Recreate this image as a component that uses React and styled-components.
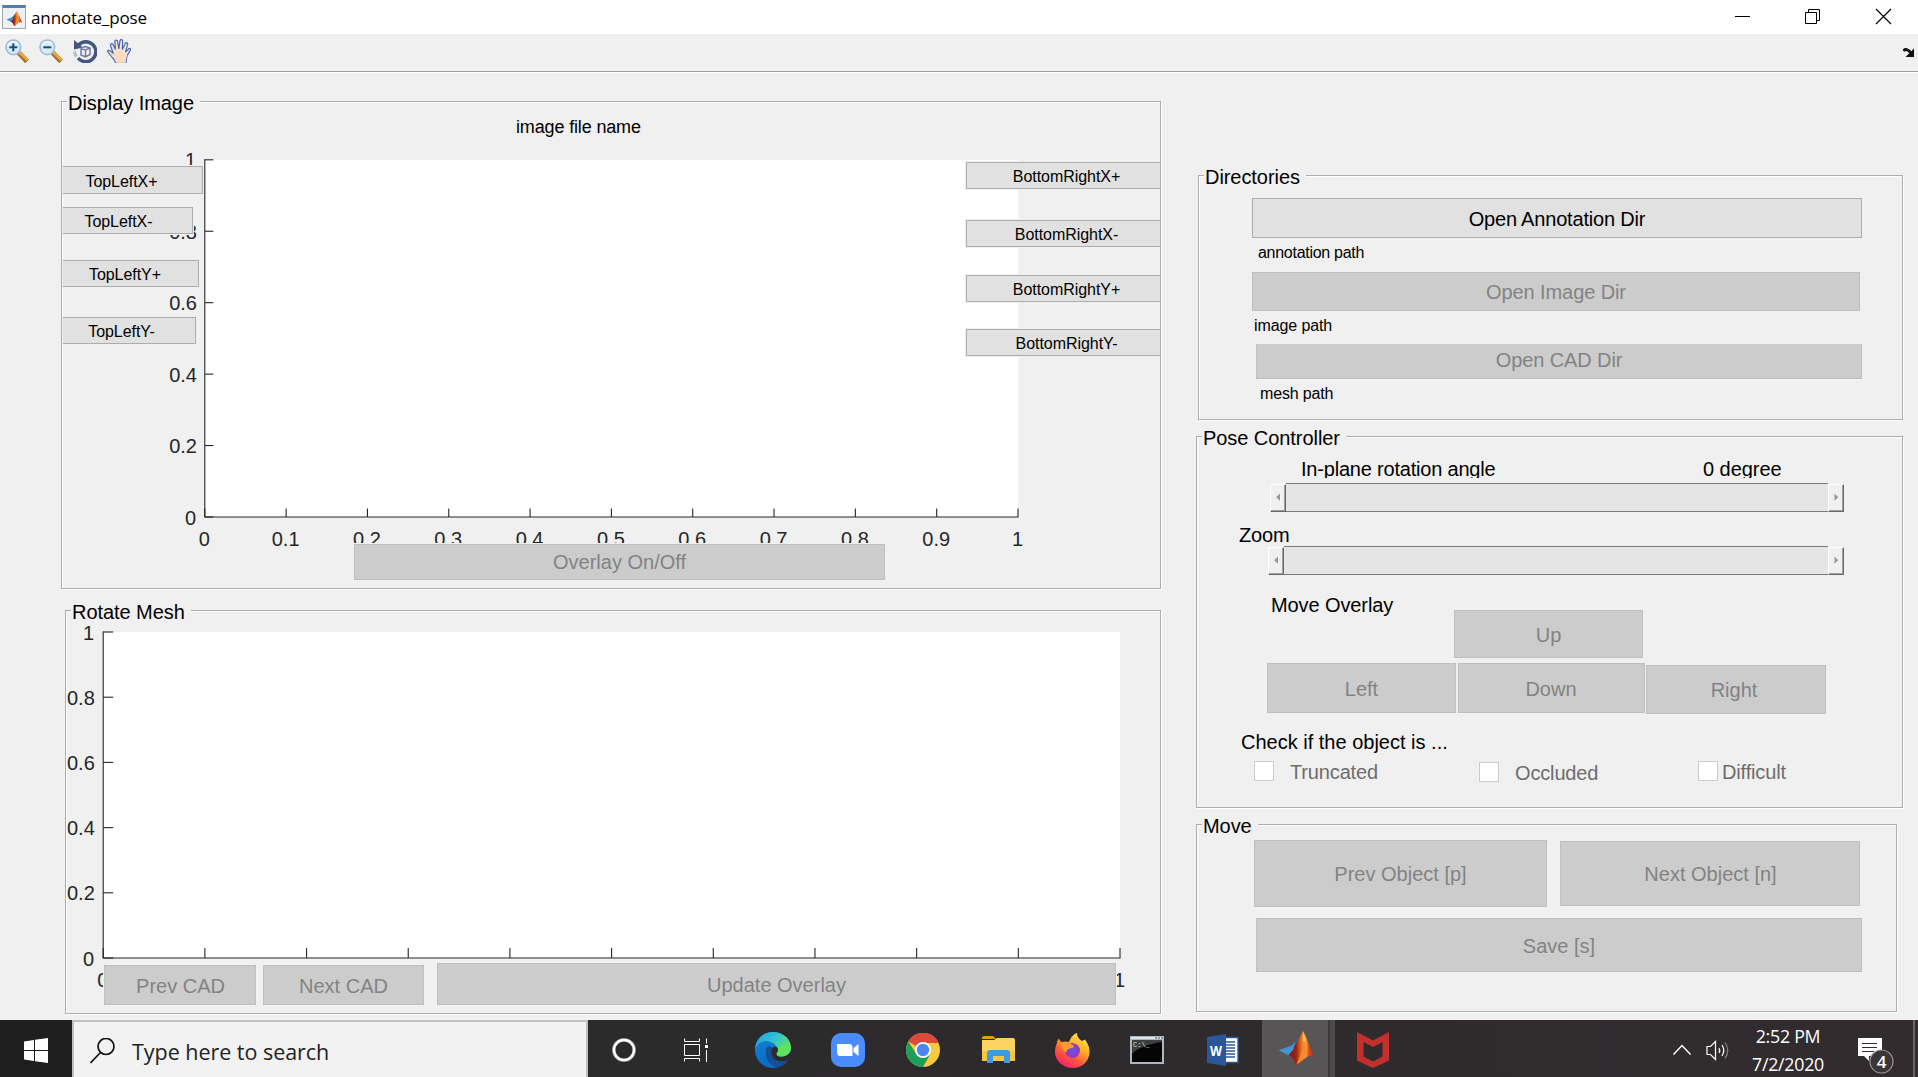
import React from "react";
import styled, { createGlobalStyle } from "styled-components";

const GlobalStyle = createGlobalStyle`
  * { box-sizing: border-box; }
  html, body { margin: 0; padding: 0; }
  body {
    background: #f0f0f0;
    font-family: "Liberation Sans", Arial, sans-serif;
    overflow: hidden;
  }
  svg { display: block; flex: none; }
  button { font-family: inherit; margin: 0; padding: 0; }
`;

const UI_FONT = `"Open Sans", "Segoe UI", "Noto Sans", sans-serif`;

const Screen = styled.div`
  width: 1918px;
  height: 1077px;
  display: flex;
  flex-direction: column;
  background: #f0f0f0;
  overflow: hidden;
`;

/* ---------- window chrome ---------- */

const TitleBar = styled.header`
  height: 34px;
  flex: none;
  display: flex;
  align-items: flex-start;
  justify-content: space-between;
  background: #fff;
`;

const TitleGroup = styled.div`
  display: flex;
  gap: 5px;
  padding: 5px 0 0 2px;
`;

const TitleText = styled.span`
  padding-top: 1px;
  font: 17px/24px ${UI_FONT};
  letter-spacing: -0.1px;
  color: #000;
`;

const WindowControls = styled.div`
  display: flex;
  gap: 54px;
  padding: 8px 26px 0 0;
`;

const ToolBar = styled.div`
  height: 39px;
  flex: none;
  display: flex;
  align-items: flex-start;
  gap: 10px;
  padding: 5px 3px 0 5px;
  border-bottom: 1px solid #fff;
  box-shadow: inset 0 -1px 0 #a0a0a0;
`;

const DockArrow = styled.div`
  margin: 9px 0 0 auto;
`;

/* ---------- work area ---------- */

const WorkArea = styled.main`
  height: 947px;
  flex: none;
  display: flex;
`;

const LeftColumn = styled.div`
  width: 1161px;
  display: flex;
  flex-direction: column;
  align-items: flex-end;
  gap: 21px;
  padding-top: 28px;
`;

const RightColumn = styled.div`
  display: flex;
  flex-direction: column;
  gap: 16px;
  padding: 102px 0 0 35px;
`;

const PanelBox = styled.section`
  width: ${(p) => p.$w}px;
  height: ${(p) => p.$h}px;
  margin-left: ${(p) => p.$ml || 0}px;
  flex: none;
  border: 1px solid #adadad;
  box-shadow: 1px 1px 0 #fff, inset 1px 1px 0 #fff;
`;

const PanelTitle = styled.h2`
  width: fit-content;
  margin: -11px 0 -13px 5px;
  padding: 0 6px 0 1px;
  background: #f0f0f0;
  font-size: 20px;
  font-weight: 400;
  line-height: 24px;
  letter-spacing: -0.06px;
  color: #000;
`;

const Layers = styled.div`
  display: grid;
  height: 100%;
  overflow: hidden;
  > * { grid-area: 1 / 1; }
`;

const Caption = styled.p`
  margin: 15px 0 0 454px;
  font-size: 18px;
  line-height: 20px;
  letter-spacing: -0.15px;
  height: 20px;
`;

const ButtonStack = styled.div`
  display: flex;
  flex-direction: column;
  justify-self: ${(p) => p.$side};
  padding: ${(p) => p.$top}px 0 0 ${(p) => p.$left || 0}px;
`;

const BottomRow = styled.div`
  display: flex;
  align-self: end;
  align-items: flex-end;
  padding: 0 0 ${(p) => p.$bottom}px ${(p) => p.$left}px;
`;

const PushButton = styled.button`
  width: ${(p) => p.$w}px;
  height: ${(p) => p.$h}px;
  margin-top: ${(p) => p.$mt || 0}px;
  margin-left: ${(p) => p.$ml || 0}px;
  padding: ${(p) => (p.$pt === undefined ? 1 : p.$pt)}px ${(p) => p.$pr || 0}px ${(p) => p.$pb || 0}px ${(p) => p.$pl || 0}px;
  flex: none;
  border: 1px solid #adadad;
  border-left-width: ${(p) => (p.$cut === "left" ? 0 : 1)}px;
  border-right-width: ${(p) => (p.$cut === "right" ? 0 : 1)}px;
  border-top-width: ${(p) => (p.$cut === "top" ? 0 : 1)}px;
  border-radius: 0;
  outline: 1px solid #f0f0f0;
  background: #e1e1e1;
  color: #000;
  font-size: 20px;
  line-height: 1.1;
  text-align: center;
  letter-spacing: ${(p) => p.$spacing || 0}px;
  &:disabled {
    background: #ccc;
    border-color: #bfbfbf;
    color: #838383;
  }
`;

const CornerButton = styled(PushButton)`
  padding-top: 3px;
  font-size: 16px;
  letter-spacing: -0.05px;
`;

const Row = styled.div`
  display: flex;
  align-items: flex-start;
  margin: ${(p) => p.$mt || 0}px 0 0 ${(p) => p.$ml || 0}px;
`;

const Label = styled.div`
  width: ${(p) => (p.$w ? `${p.$w}px` : "auto")};
  height: ${(p) => p.$h || 24}px;
  margin: ${(p) => p.$mt || 0}px 0 0 ${(p) => p.$ml || 0}px;
  font-size: 20px;
  line-height: 24px;
  letter-spacing: ${(p) => p.$spacing || 0}px;
  white-space: nowrap;
  overflow: hidden;
  color: #000;
`;

const PathText = styled.div`
  height: 18px;
  margin: ${(p) => p.$mt}px 0 0 ${(p) => p.$ml}px;
  font-size: 16px;
  line-height: 18px;
  letter-spacing: ${(p) => p.$spacing}px;
`;

/* slider */

const SliderBox = styled.div`
  display: flex;
  width: ${(p) => p.$w}px;
  height: 29px;
  margin: ${(p) => p.$mt}px 0 0 ${(p) => p.$ml}px;
`;

const SliderArrow = styled.div`
  width: 16px;
  margin-top: 1px;
  display: flex;
  align-items: center;
  justify-content: center;
  padding-bottom: 2px;
  border: solid;
  border-width: 1px;
  border-color: #fff #696969 #696969 #fff;
  box-shadow: inset -1px -1px 0 #a0a0a0;
  background: #f0f0f0;
`;

const SliderTrack = styled.div`
  flex: 1;
  border: solid #7b7b7b;
  border-width: 1px 0;
  background: #e5e5e5;
`;

function Slider({ w, mt, ml }) {
  return (
    <SliderBox $w={w} $mt={mt} $ml={ml}>
      <SliderArrow>
        <svg width="5" height="9" viewBox="0 0 5 9"><path d="M4.500 1v8L.8 5z" fill="#fff" /><path d="M4 .5v7.500L.2 4.200z" fill="#969696" /></svg>
      </SliderArrow>
      <SliderTrack />
      <SliderArrow>
        <svg width="5" height="9" viewBox="0 0 5 9"><path d="M1 1v8l4-4z" fill="#fff" /><path d="M.5.500V8l3.800-3.800z" fill="#969696" /></svg>
      </SliderArrow>
    </SliderBox>
  );
}

/* checkbox */

const CheckLabel = styled.label`
  display: flex;
  align-items: flex-start;
  margin-top: ${(p) => p.$mt || 0}px;
  width: ${(p) => p.$w}px;
  gap: ${(p) => p.$gap}px;
  font-size: 20px;
  line-height: 24px;
  letter-spacing: -0.15px;
  color: #6d6d6d;
`;

const CheckSquare = styled.span`
  width: 20px;
  height: 20px;
  flex: none;
  border: 1px solid #ccc;
  background: #fff;
`;

const CheckText = styled.span`
  margin-top: -1px;
`;

function Check({ children, ...rest }) {
  return (
    <CheckLabel {...rest}>
      <CheckSquare />
      <CheckText>{children}</CheckText>
    </CheckLabel>
  );
}

function Panel({ title, w, h, ml, children }) {
  return (
    <PanelBox $w={w} $h={h} $ml={ml}>
      <PanelTitle>{title}</PanelTitle>
      {children}
    </PanelBox>
  );
}

/* ---------- axes ---------- */

const TickText = styled.text`
  font-family: "Liberation Sans", Arial, sans-serif;
  font-size: 20px;
  fill: #262626;
`;

function Axes({ origin, size, left, right, top, bottom, tick, xLabelBase, yLabelEdge }) {
  const xs = Array.from({ length: 11 }, (_, i) => i / 10);
  const ys = [0, 0.2, 0.4, 0.6, 0.8, 1];
  const px = (v) => left + (right - left) * v;
  const py = (v) => bottom - (bottom - top) * v;
  return (
    <svg width={size[0]} height={size[1]} viewBox={`${origin[0]} ${origin[1]} ${size[0]} ${size[1]}`}>
      <rect x={left} y={top} width={right - left} height={bottom - top} fill="#fff" />
      <g stroke="#262626" strokeWidth="1.100">
        <path d={`M${left} ${top - 0.5}V${bottom}H${right + 0.5}`} fill="none" />
        {xs.map((v) => <path key={v} d={`M${px(v)} ${bottom}v${-tick}`} />)}
        {ys.map((v) => <path key={v} d={`M${left} ${py(v)}h${tick}`} />)}
      </g>
      {xs.map((v) => <TickText key={v} x={px(v) - 0.5} y={xLabelBase} textAnchor="middle">{v}</TickText>)}
      {ys.map((v) => <TickText key={v} x={yLabelEdge - (v === 0 || v === 1 ? 0.8 : 0)} y={py(v) + 7.6} textAnchor="end">{v}</TickText>)}
    </svg>
  );
}

/* ---------- icons ---------- */

function MatlabIcon({ width, height, id }) {
  return (
    <svg width={width} height={height} viewBox="0 0 36 34">
      <defs>
        <linearGradient id={`${id}b`} x1="0" y1="0" x2="1" y2="0">
          <stop offset="0" stopColor="#4fb0e6" /><stop offset=".6" stopColor="#2d7ab8" /><stop offset="1" stopColor="#2a4a70" />
        </linearGradient>
        <linearGradient id={`${id}r`} x1="0" y1="0" x2="1" y2="0">
          <stop offset="0" stopColor="#6b1410" /><stop offset=".35" stopColor="#9c2414" /><stop offset=".55" stopColor="#f07a22" /><stop offset=".68" stopColor="#f9a83a" /><stop offset=".8" stopColor="#d8431c" /><stop offset="1" stopColor="#b52a18" />
        </linearGradient>
      </defs>
      <path d="M0 19.500 10.500 15.500C14 15 18 8 22 2.500L17 17 9.500 24z" fill={`url(#${id}b)`} />
      <path d="M7 22.500C14 20 18 11 24 0c3 4 8 20 12 27-4-3-6-3-8.500-.5C24 28 20 34 17 34c-2-5-4-10-10-11.500z" fill={`url(#${id}r)`} />
      <path d="M0 19.500 10.500 15.500c2-.3 4-2.500 6-5.200L14 19l-4.500 5z" fill="#3f97d2" />
      <path d="M24 1c1.200 7 .8 18-6.500 32 3.500-1 6.500-6 9-7C27.500 18 26 8 24 1z" fill="#f58a2a" />
      <path d="M24 1c.2 3 .3 6 .1 9l2 .4C25.700 7 25 3.500 24 1z" fill="#ffe45c" />
    </svg>
  );
}

const FigureIconFrame = styled.div`
  width: 24px;
  height: 24px;
  display: flex;
  align-items: center;
  justify-content: center;
  border: 1px solid #a3a7ac;
  border-top: 3px solid #4d80ac;
  background: #eef1f3;
`;

function Magnifier({ minus }) {
  return (
    <svg width="24" height="24" viewBox="0 0 24 24">
      <path d="M13.500 13.500 22 22.500" stroke="#9a7440" strokeWidth="5" />
      <path d="M14 13 22.500 21" stroke="#f1a53a" strokeWidth="3" />
      <circle cx="8.300" cy="8.300" r="7.300" fill="#cfeefa" stroke="#a3b8da" strokeWidth="1.600" />
      <path d="M3 6.500A6 6 0 0 1 13 5" stroke="#f1fbff" strokeWidth="2" fill="none" />
      <path d={minus ? "M4.300 8.300h8" : "M4.300 8.300h8M8.300 4.300v8"} stroke="#20477e" strokeWidth="2" />
    </svg>
  );
}

function RotateIcon() {
  return (
    <svg width="24" height="24" viewBox="0 0 24 24" fill="none">
      <path d="M3.500 17.500a10 10 0 0 1-2-5" stroke="#b9bec9" strokeWidth="3" />
      <path d="M5.500 6A10 10 0 1 1 5 19" stroke="#44567f" strokeWidth="3.400" />
      <path d="M1 1v9.500l9-2z" fill="#44567f" />
      <path d="M12.500 7.500 17 9v6.500L12.500 18 8 16V9zM8 9.500l4.500 1.500L17 9M12.500 11v6.500" stroke="#6d7da3" strokeWidth="1.500" />
    </svg>
  );
}

function HandIcon() {
  return (
    <svg width="24" height="24" viewBox="0 0 24 24">
      <path d="M8.500 24c-.5-3-2-4-4-6.500L.8 13c-.8-1.500 1-2.300 2.200-1.300l3.200 2.500L3.500 6.500C3 4.800 5.200 4 6 5.600l2.500 5L7.800 2.500C7.800.6 10.300.6 10.600 2.400l1.200 7.400L13 1.800c.3-1.800 2.700-1.500 2.700.3l-.4 8.500 3-6c.8-1.600 2.800-.7 2.300 1L18.500 13l3.300-3.400c1.200-.9 2.300.3 1.500 1.500L20 17c-1 2.500-.8 4-1 7z" fill="#fbe3cf" stroke="#4668b4" strokeWidth="1.200" />
      <path d="M9.300 23.800h9.200c.2-4 1-5.500 2-8L12 12l-7 3.500c2 3 4 4.500 4.300 8.300z" fill="#fbdcc2" />
    </svg>
  );
}

/* ---------- taskbar ---------- */

const TaskBar = styled.footer`
  height: 57px;
  flex: none;
  display: flex;
  background: linear-gradient(90deg, #1e1e1e 0, #1e1e1e 72px, #2b2b2c 588px, #2d2a2c 1000px, #322c2f 1918px);
`;

const StartButton = styled.div`
  width: 72px;
  display: flex;
  padding: 18px 0 0 24px;
`;

const SearchBox = styled.div`
  width: 516px;
  display: flex;
  gap: 16px;
  padding: 16px 0 0 16px;
  border: solid #c0c0c0;
  border-width: 2px 2px 0;
  background: #f2f2f2;
`;

const SearchText = styled.span`
  font: 21.500px/28px ${UI_FONT};
  letter-spacing: -0.03px;
  color: #222;
`;

const Apps = styled.div`
  display: flex;
  padding-left: 14px;
`;

const AppSlot = styled.div`
  width: ${(p) => p.$w || 75}px;
  display: flex;
  align-items: center;
  justify-content: center;
  padding-top: 3px;
`;

const ActiveSlot = styled(AppSlot)`
  background: #575555;
  padding: 2px 0 3px 4px;
`;

const StackEdge = styled.div`
  width: 7px;
  border-left: 2px solid #3a3838;
  background: #4b4949;
`;

const Tray = styled.div`
  margin-left: auto;
  display: flex;
  color: #fff;
`;

const Clock = styled.div`
  width: 90px;
  margin-left: 13px;
  padding-top: 2px;
  font: 17.800px/28px ${UI_FONT};
  letter-spacing: -0.25px;
  text-align: center;
  color: #fff;
`;

const Notification = styled.div`
  margin-left: 25px;
  padding-top: 18px;
  width: 55px;
`;

const BadgeText = styled.text`
  font: 600 17px ${UI_FONT};
  fill: #fff;
`;

const WordText = styled.text`
  font: 700 15px ${UI_FONT};
  fill: #fff;
`;

const PromptText = styled.text`
  font: 7px "Liberation Mono", monospace;
  fill: #ddd;
`;

const ShowDesktop = styled.div`
  width: 5px;
  border-left: 2px solid #6b6768;
`;

const EdgeIcon = () => (
  <svg width="36" height="36" viewBox="0 0 36 36">
    <defs>
      <linearGradient id="eg" x1="0" y1="0" x2="1" y2=".6"><stop offset="0" stopColor="#2399dc" /><stop offset=".5" stopColor="#2fc1d6" /><stop offset="1" stopColor="#66e84e" /></linearGradient>
      <linearGradient id="eb" x1="0" y1="0" x2=".5" y2="1"><stop offset="0" stopColor="#1584d8" /><stop offset="1" stopColor="#0b68c2" /></linearGradient>
    </defs>
    <circle cx="18" cy="18" r="18" fill="url(#eb)" />
    <path d="M0 17C1 6 9 0 18 0c10 0 18 7 18 15.500 0 6-5 9-10 9-4 0-5-2-4-3.500 1-1.500 1.500-3 .5-5C20.500 12 16 9 11 9 6 9 2 12 0 17z" fill="url(#eg)" />
    <path d="M11.500 15.500C9 24 13 33 22 35.500 27 34.500 31.500 31.500 33.500 27.500 28 30.500 20 29.500 17.500 25c-1.500-2.500-1.500-6 0-9-2-2-4.500-2-6-.5z" fill="#124f94" />
    <path d="M22.500 16c1 2 .5 3.500-.5 5-1 1.500 0 3.500 4 3.500 4 0 7.500-1.500 9.500-5.500l.5 7c-1 1-1.500 1.300-2.500 1.700-5.500 2.800-13.500 1.800-16-2.700-1.500-2.500-1.500-6 0-9 1.500-1.800 4-1.800 5 0z" fill="#2b2b2d" />
    <path d="M22 21c-1 1.500 0 3.500 4 3.500 4.500 0 8-2 9.500-6L30 13l-7 3c.5 2 0 3.500-1 5z" fill="#5fe35a" />
  </svg>
);

const ZoomIcon = () => (
  <svg width="34" height="34" viewBox="0 0 34 34">
    <rect width="34" height="34" rx="10" fill="#4a8cff" />
    <path d="M6 11h12a3.500 3.500 0 0 1 3.500 3.500V23h-12A3.500 3.500 0 0 1 6 19.500zM22.500 15l5-4v12l-5-4z" fill="#fff" />
  </svg>
);

const ChromeIcon = () => (
  <svg width="34" height="34" viewBox="0 0 34 34">
    <circle cx="17" cy="17" r="17" fill="#f9c940" />
    <path d="M17 17 2.300 8.500A17 17 0 0 1 32.800 10H17z" fill="#db4a3d" />
    <path d="M2.300 8.500A17 17 0 0 0 17 34l6.800-12L10.500 21z" fill="#1e9e59" />
    <circle cx="17" cy="17" r="8" fill="#fff" />
    <circle cx="17" cy="17" r="6.200" fill="#4a88ee" />
  </svg>
);

const ExplorerIcon = () => (
  <svg width="33" height="28" viewBox="0 0 33 28">
    <path d="M0 2q0-2 2-2h9l3 3H0z" fill="#e0a00a" />
    <path d="M0 4h12l3-2h16q2 0 2 2v21H0z" fill="#fcd462" />
    <path d="M0 15h33v10H0z" fill="#f7c546" />
    <path d="M5 27V17q0-3 3-3h17q3 0 3 3v10h-6v-7H11v7z" fill="#3f9ae0" />
  </svg>
);

const FirefoxIcon = () => (
  <svg width="35" height="35" viewBox="0 0 35 35">
    <defs>
      <linearGradient id="ff" x1=".8" y1="0" x2=".2" y2="1"><stop offset="0" stopColor="#fff04a" /><stop offset=".35" stopColor="#ffb02c" /><stop offset=".65" stopColor="#ff5a38" /><stop offset="1" stopColor="#f0157a" /></linearGradient>
      <radialGradient id="fp"><stop offset="0" stopColor="#6a52e8" /><stop offset="1" stopColor="#9a38b8" /></radialGradient>
    </defs>
    <path d="M2 10C2 8 3 6.500 4 5.500c.5 2 1.500 3 3 3.500 3-1 5-.5 7 0C16 4 18 1.500 22 0c0 4 2 6 5 8l3-1.500c3 4 5 9 4.500 13C34 28.500 27 35 18 35 8 35 0 28 0 19c0-3.500.8-6.500 2-9z" fill="url(#ff)" />
    <circle cx="17.500" cy="17.500" r="7.500" fill="url(#fp)" />
    <path d="M6 10.500c4-2 8-.5 12 1.500 1.500 1 1 2.500-1 3-3 .5-5 1-5.500 4-3-1-6-4-5.500-8.500z" fill="#ff9a2c" />
    <path d="M19 9c5 1 8 5 8 10" stroke="#ffb62e" strokeWidth="2.500" fill="none" />
  </svg>
);

const CmdIcon = () => (
  <svg width="34" height="28" viewBox="0 0 34 28">
    <rect width="34" height="28" fill="#aeb7bd" />
    <path d="M1 1h32v2H1z" fill="#dde5ea" />
    <path d="M25 2h2m1 0h2m1 0h2" stroke="#75838c" strokeWidth="1.500" />
    <path d="M2 4h30v22H2z" fill="#050505" />
    <path d="M2 4h30v2C20 8 8 11 2 18z" fill="#3c4040" />
    <PromptText x="3" y="10.500">C:\_</PromptText>
  </svg>
);

const WordIcon = () => (
  <svg width="32" height="32" viewBox="0 0 32 32">
    <path d="M17 3.500h14v25H17z" fill="#fff" stroke="#2b579a" strokeWidth="1.400" />
    <path d="M19 8h9m-9 3h9m-9 3h9m-9 3h9m-9 3h9m-9 3h9" stroke="#2b579a" strokeWidth="1.500" />
    <path d="M0 3 19 0v32L0 29z" fill="#2b579a" />
    <WordText x="3" y="21.500" textLength="12" lengthAdjust="spacingAndGlyphs">W</WordText>
  </svg>
);

const McAfeeIcon = () => (
  <svg width="32" height="36" viewBox="0 0 32 36">
    <path d="M0 0 16 8.500 32 0v28.500L16 36 0 28.500zM6.500 10v14.500L16 29.500l9.500-5V10L16 15z" fill="#c3302c" fillRule="evenodd" />
  </svg>
);

export default function App() {
  return (
    <Screen>
      <GlobalStyle />
      <TitleBar>
        <TitleGroup>
          <FigureIconFrame><MatlabIcon width={17} height={15} id="t" /></FigureIconFrame>
          <TitleText>annotate_pose</TitleText>
        </TitleGroup>
        <WindowControls>
          <svg width="17" height="17" viewBox="0 0 17 17"><path d="M2 8.500h15" stroke="#000" /></svg>
          <svg width="17" height="17" viewBox="0 0 17 17" fill="none" stroke="#000"><path d="M1.500 4.500h11v11h-11zM4.500 4V1.500h11v11H13" /></svg>
          <svg width="17" height="17" viewBox="0 0 17 17"><path d="m1 1 15 15M16 1 1 16" stroke="#000" strokeWidth="1.200" /></svg>
        </WindowControls>
      </TitleBar>
      <ToolBar>
        <Magnifier />
        <Magnifier minus />
        <RotateIcon />
        <HandIcon />
        <DockArrow>
          <svg width="12" height="10" viewBox="0 0 12 10"><path d="M.5 3C2 .5 5 1 8 5" stroke="#111" strokeWidth="2.800" fill="none" /><path d="M11 .5V9H2.500z" fill="#111" /></svg>
        </DockArrow>
      </ToolBar>

      <WorkArea>
        <LeftColumn>
          <Panel title="Display Image" w={1100} h={488}>
            <Layers>
              <Axes origin={[62, 102]} size={[1098, 486]} left={204.800} right={1018} top={159.800} bottom={517} tick={8.500} xLabelBase={546} yLabelEdge={197} />
              <Caption>image file name</Caption>
              <ButtonStack $side="start" $top={64} $left={1}>
                <CornerButton $cut="left" $w={140} $h={28} $pr={22}>TopLeftX+</CornerButton>
                <CornerButton $cut="left" $w={130} $h={27} $mt={13} $pr={18}>TopLeftX-</CornerButton>
                <CornerButton $cut="left" $w={136} $h={27} $mt={26} $pr={11}>TopLeftY+</CornerButton>
                <CornerButton $cut="left" $w={133} $h={27} $mt={30} $pr={15}>TopLeftY-</CornerButton>
              </ButtonStack>
              <ButtonStack $side="end" $top={60}>
                <CornerButton $cut="right" $w={194} $h={27} $pl={6}>BottomRightX+</CornerButton>
                <CornerButton $cut="right" $w={194} $h={27} $mt={31} $pl={6}>BottomRightX-</CornerButton>
                <CornerButton $cut="right" $w={194} $h={27} $mt={28} $pl={6}>BottomRightY+</CornerButton>
                <CornerButton $cut="right" $w={194} $h={27} $mt={27} $pl={6}>BottomRightY-</CornerButton>
              </ButtonStack>
              <BottomRow $bottom={8} $left={292}>
                <PushButton disabled $w={531} $h={36} $pt={0} $pb={1}>Overlay On/Off</PushButton>
              </BottomRow>
            </Layers>
          </Panel>

          <Panel title="Rotate Mesh" w={1096} h={404}>
            <Layers>
              <Axes origin={[66, 611]} size={[1094, 402]} left={103.200} right={1120} top={632} bottom={958} tick={10} xLabelBase={987} yLabelEdge={94.800} />
              <BottomRow $bottom={8} $left={38}>
                <PushButton disabled $w={152} $h={40} $pl={1}>Prev CAD</PushButton>
                <PushButton disabled $w={161} $h={40} $ml={7}>Next CAD</PushButton>
                <PushButton disabled $w={679} $h={42} $ml={13}>Update Overlay</PushButton>
              </BottomRow>
            </Layers>
          </Panel>
        </LeftColumn>

        <RightColumn>
          <Panel title="Directories" w={705} h={245} ml={2}>
            <Row $mt={22} $ml={53}><PushButton $w={610} $h={40} $spacing={-0.18}>Open Annotation Dir</PushButton></Row>
            <PathText $mt={6} $ml={59} $spacing={-0.28}>annotation path</PathText>
            <Row $mt={10} $ml={53}><PushButton disabled $w={608} $h={39} $spacing={-0.1}>Open Image Dir</PushButton></Row>
            <PathText $mt={6} $ml={55} $spacing={-0.1}>image path</PathText>
            <Row $mt={9} $ml={57}><PushButton disabled $cut="top" $w={606} $h={35} $pt={0} $pb={3} $spacing={-0.1}>Open CAD Dir</PushButton></Row>
            <PathText $mt={6} $ml={61} $spacing={-0.15}>mesh path</PathText>
          </Panel>

          <Panel title="Pose Controller" w={707} h={372}>
            <Row $mt={20} $ml={104}>
              <Label $w={402} $h={21} $spacing={-0.2}>In-plane rotation angle</Label>
              <Label $h={21} $spacing={-0.05}>0 degree</Label>
            </Row>
            <Slider w={574} mt={5} ml={73} />
            <Label $h={19} $mt={11} $ml={42} $spacing={-0.15}>Zoom</Label>
            <Slider w={576} mt={4} ml={71} />
            <Row $mt={18} $ml={74}>
              <Label $w={183} $spacing={-0.1}>Move Overlay</Label>
              <PushButton disabled $w={189} $h={48} $mt={17}>Up</PushButton>
            </Row>
            <Row $mt={5} $ml={70}>
              <PushButton disabled $w={189} $h={50}>Left</PushButton>
              <PushButton disabled $w={187} $h={50} $ml={2} $pr={1}>Down</PushButton>
              <PushButton disabled $w={180} $h={49} $ml={1} $mt={2} $pr={4}>Right</PushButton>
            </Row>
            <Label $mt={16} $ml={44}>Check if the object is ...</Label>
            <Row $mt={7} $ml={57}>
              <Check $w={225} $gap={16}>Truncated</Check>
              <Check $w={219} $gap={16} $mt={1}>Occluded</Check>
              <Check $w={100} $gap={4}>Difficult</Check>
            </Row>
          </Panel>

          <Panel title="Move" w={701} h={188}>
            <Row $mt={15} $ml={57}>
              <PushButton disabled $w={293} $h={67}>Prev Object [p]</PushButton>
              <PushButton disabled $w={300} $h={65} $ml={13} $mt={1} $pl={1}>Next Object [n]</PushButton>
            </Row>
            <Row $mt={11} $ml={59}><PushButton disabled $w={606} $h={54}>Save [s]</PushButton></Row>
          </Panel>
        </RightColumn>
      </WorkArea>

      <TaskBar>
        <StartButton>
          <svg width="24" height="25" viewBox="0 0 24 25"><path d="M0 3.500 10 2v10H0zM11 1.800 24 0v12H11zM0 13h10v10L0 21.500zM11 13h13v12l-13-1.800z" fill="#fff" /></svg>
        </StartButton>
        <SearchBox>
          <svg width="26" height="26" viewBox="0 0 26 26" fill="none" stroke="#111" strokeWidth="1.700"><circle cx="16" cy="8.500" r="8" /><path d="M10.500 14.500.5 25" /></svg>
          <SearchText>Type here to search</SearchText>
        </SearchBox>
        <Apps>
          <AppSlot $w={44}><svg width="24" height="24" viewBox="0 0 24 24"><circle cx="12" cy="12" r="10.300" fill="none" stroke="#8a8a8a" strokeWidth="3.400" /><circle cx="12" cy="12" r="10" fill="none" stroke="#fff" strokeWidth="2.400" /></svg></AppSlot>
          <AppSlot $w={99}><svg width="24" height="24" viewBox="0 0 24 24" fill="none" stroke="#fff"><path d="M.5.500v3h15v-3M.5 6.500h15v11H.500zM.5 23.500v-3h15v3M22.500.500v5M22.500 12v12" /><path d="M21 7h3v3h-3z" fill="#fff" stroke="none" /></svg></AppSlot>
          <AppSlot $w={55}><EdgeIcon /></AppSlot>
          <AppSlot $w={96}><ZoomIcon /></AppSlot>
          <AppSlot $w={53}><ChromeIcon /></AppSlot>
          <AppSlot $w={98}><ExplorerIcon /></AppSlot>
          <AppSlot $w={51}><FirefoxIcon /></AppSlot>
          <AppSlot $w={98}><CmdIcon /></AppSlot>
          <AppSlot $w={53}><WordIcon /></AppSlot>
          <AppSlot $w={13} />
          <ActiveSlot $w={66}><MatlabIcon width={36} height={34} id="k" /></ActiveSlot>
          <StackEdge />
          <AppSlot $w={76}><McAfeeIcon /></AppSlot>
        </Apps>
        <Tray>
          <svg width="60" height="57" viewBox="1671 1020 60 57" fill="none" stroke="#fff" strokeWidth="1.500">
            <path d="m1674.500 1054.500 8.500-9 8.500 9" />
            <path d="M1708 1046.500h3.500l5-5v18l-5-5h-3.500z" strokeWidth="1.200" />
            <path d="M1720 1048q1.500 2.500 0 5M1723 1045q3.500 5.500 0 11" strokeWidth="1.200" />
            <path d="M1726 1042.500q5.500 8 0 16" stroke="#8a8687" strokeWidth="1.200" />
          </svg>
          <Clock>2:52 PM<br />7/2/2020</Clock>
          <Notification>
            <svg width="40" height="38" viewBox="1858 1038 40 38">
              <path d="M1858 1038h24v18h-13v5l-5-5h-6z" fill="#fff" />
              <path d="M1862 1043.500h15m-15 4h15m-15 4h12" stroke="#322c2f" strokeWidth="1.200" />
              <circle cx="1881.500" cy="1061.500" r="11.500" fill="#3a3638" stroke="#99969a" strokeWidth="1.200" />
              <BadgeText x="1881.500" y="1067.500" textAnchor="middle">4</BadgeText>
            </svg>
          </Notification>
          <ShowDesktop />
        </Tray>
      </TaskBar>
    </Screen>
  );
}
